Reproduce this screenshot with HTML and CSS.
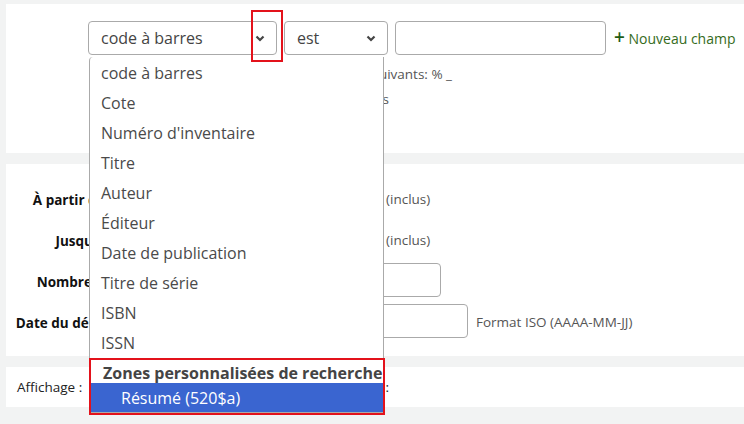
FILE: index.html
```html
<!DOCTYPE html>
<html lang="fr">
<head>
<meta charset="utf-8">
<title>Recherche avancée</title>
<link rel="stylesheet" href="styles.css">
</head>
<body>
<div class="page">
  <section class="panel panel-search">
    <div class="field-row">
      <div class="select select-field">
        <span class="select-text">code à barres</span>
        <svg class="chev" width="10" height="7" viewBox="0 0 10 7"><polyline points="1.5,1.5 5,5 8.5,1.5" fill="none" stroke="#454545" stroke-width="2.2"/></svg>
      </div>
      <div class="select select-op">
        <span class="select-text">est</span>
        <svg class="chev" width="10" height="7" viewBox="0 0 10 7"><polyline points="1.5,1.5 5,5 8.5,1.5" fill="none" stroke="#454545" stroke-width="2.2"/></svg>
      </div>
      <div class="input input-value"></div>
      <a class="add-field" href="#"><span class="plus">+</span> Nouveau champ</a>
    </div>
    <p class="hint hint-1">Caractères génériques suivants: % _</p>
    <p class="hint hint-2">Recherche insensible aux accents</p>
  </section>

  <section class="panel panel-dates">
    <div class="form-grid">
      <label class="lbl">À partir de :</label>
      <div class="ctrl"><div class="input in-1"></div><span class="note">(inclus)</span></div>
      <label class="lbl">Jusqu'à :</label>
      <div class="ctrl"><div class="input in-1"></div><span class="note">(inclus)</span></div>
      <label class="lbl">Nombre de</label>
      <div class="ctrl"><div class="input in-3"></div></div>
      <label class="lbl">Date du début</label>
      <div class="ctrl"><div class="input in-4"></div><span class="note">Format ISO (AAAA-MM-JJ)</span></div>
    </div>
  </section>

  <section class="panel panel-display">
    <div class="display-group">
      <span class="display-label">Affichage :</span>
      <span class="display-sort">Tri :</span>
    </div>
  </section>
</div>

<ul class="dropdown">
  <li class="opt">code à barres</li>
  <li class="opt">Cote</li>
  <li class="opt">Numéro d'inventaire</li>
  <li class="opt">Titre</li>
  <li class="opt">Auteur</li>
  <li class="opt">Éditeur</li>
  <li class="opt">Date de publication</li>
  <li class="opt">Titre de série</li>
  <li class="opt">ISBN</li>
  <li class="opt">ISSN</li>
  <li class="group">Zones personnalisées de recherche</li>
  <li class="opt opt-selected">Résumé (520$a)</li>
</ul>

<div class="mark mark-arrow"></div>
<div class="mark mark-group"></div>
</body>
</html>
```
FILE: styles.css
```css
* { box-sizing: border-box; }
html, body { margin: 0; padding: 0; }
body {
  background: #f2f3f3;
  font-family: "Segoe UI", "Open Sans", "Noto Sans", sans-serif;
  color: #222;
  width: 744px;
  height: 424px;
  overflow: hidden;
  position: relative;
}
.page { padding-top: 4px; }
.panel { background: #fff; margin-left: 6px; }
.panel-search { height: 149px; padding: 17px 0 0 82px; }
.panel-dates { height: 192px; margin-top: 11px; padding-top: 17px; }
.panel-display { height: 40px; margin-top: 11px; display: flex; align-items: center; padding-left: 11px; font-size: 13.5px; color: #222; }
.display-group { width: 372px; display: flex; justify-content: space-between; }

.field-row { display: flex; align-items: center; }
.select {
  height: 34px;
  border: 1px solid #aaa;
  border-radius: 4px;
  display: flex;
  align-items: center;
  justify-content: space-between;
  padding: 0 11px 0 12px;
  font-size: 16px;
  color: #444;
}
.select-field { width: 189px; }
.select-op { width: 104px; margin-left: 7px; }
.chev { display: block; }
.input { height: 34px; border: 1px solid #aaa; border-radius: 4px; background: #fff; }
.input-value { width: 211px; margin-left: 7px; }
.add-field { margin-left: 8px; font-size: 14px; color: #356b1c; text-decoration: none; }
.plus { color: #1f5c14; font-size: 19px; font-weight: 600; line-height: 1; }

.hint { margin: 0; font-size: 13.5px; color: #555; line-height: 18px; text-align: right; white-space: nowrap; }
.hint-1 { margin-top: 10px; width: 364px; }
.hint-2 { margin-top: 7px; width: 301px; }

.form-grid {
  display: grid;
  grid-template-columns: 106px 1fr;
  column-gap: 8px;
  row-gap: 7px;
  align-items: center;
}
.lbl { text-align: right; font-size: 13.5px; font-weight: 700; color: #111; white-space: nowrap; padding-top: 3px; }
.ctrl { display: flex; align-items: center; gap: 8px; }
.in-1 { width: 258px; }
.in-3 { width: 321px; }
.in-4 { width: 348px; }
.note { font-size: 13.5px; color: #555; padding-top: 2px; }

.dropdown {
  position: absolute;
  left: 89px;
  top: 57px;
  width: 295px;
  margin: 0;
  padding: 1px 0 0 0;
  list-style: none;
  background: #fff;
  border: 1px solid #aaa;
  border-top: none;
  border-radius: 4px 0 0 0;
  font-size: 16px;
  color: #4a4a4a;
}
.opt { height: 30px; line-height: 30px; padding-left: 11px; white-space: nowrap; }
.group { height: 25px; line-height: 25px; padding: 3px 0 0 13px; font-weight: 700; color: #444; white-space: nowrap; overflow: hidden; }
.opt-selected { background: #3a65d0; color: #fff; padding: 2px 0 0 31px; height: 29px; line-height: 27px; }

.mark { position: absolute; border: 2px solid #e3121b; }
.mark-arrow { left: 251px; top: 10px; width: 32px; height: 52px; }
.mark-group { left: 89px; top: 358px; width: 296px; height: 57px; }
```
